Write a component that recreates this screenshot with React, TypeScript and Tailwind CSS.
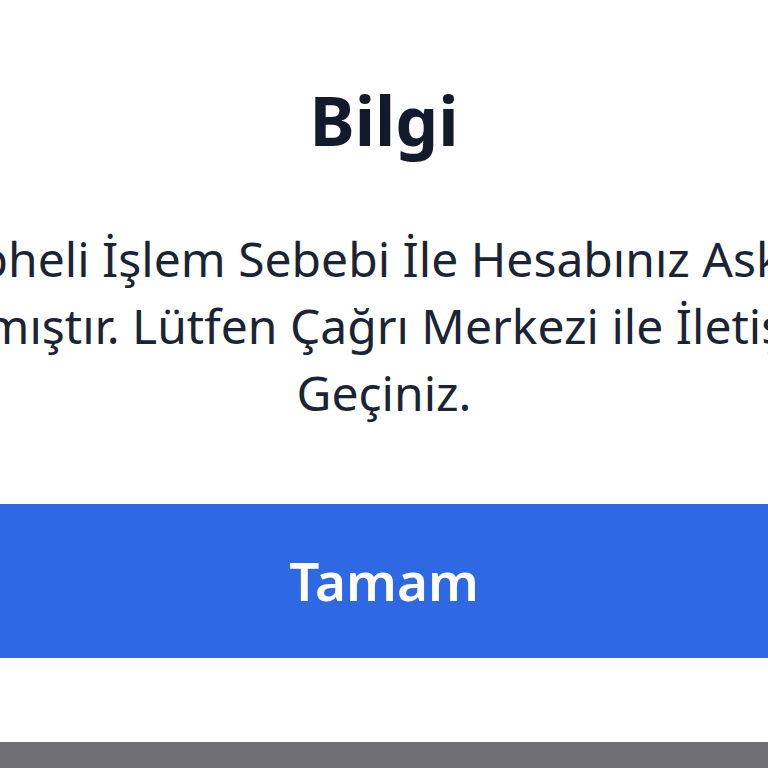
export default function App() {
  const lines = [
    'Şüpheli İşlem Sebebi İle Hesabınız Askıya',
    'Alınmıştır. Lütfen Çağrı Merkezi ile İletişime',
    'Geçiniz.',
  ]

  return (
    <div className="flex h-[768px] w-[768px] flex-col overflow-hidden bg-white font-['Noto_Sans',sans-serif]">
      <div className="flex flex-1 flex-col items-center">
        <h1 className="mt-[72px] text-[68px] font-bold leading-[96px] text-[#121a2b]">Bilgi</h1>
        <div className="mt-[57px] flex w-full flex-col items-center text-[48px] leading-[67px] text-[#1c2433]">
          {lines.map((line) => (
            <p key={line} className="whitespace-nowrap">{line}</p>
          ))}
        </div>
        <button className="mt-[78px] h-[154px] w-full bg-[#2f68e3] text-[53px] font-semibold text-white">
          Tamam
        </button>
      </div>
      <div className="h-[26px] w-full bg-[#6e6e73]" />
    </div>
  )
}
